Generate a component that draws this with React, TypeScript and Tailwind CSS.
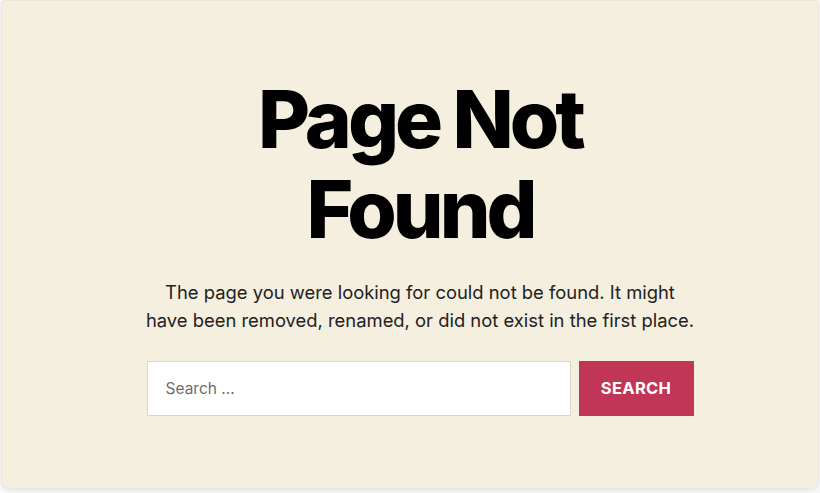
import React from "react";

export default function App() {
  return (
    <div className="w-[820px] h-[493px] bg-[#fafafa] px-[1px] pb-[4px]" style={{ fontFamily: "Inter, 'Noto Sans', sans-serif" }}>
      <div className="h-[489px] bg-[#f5efe0] rounded-b-[8px] rounded-t-[4px] border border-[#ece7da] shadow-[0_2px_4px_rgba(0,0,0,0.08)] flex flex-col items-center pt-[73px] pl-[20px]">
        <h1 className="text-[80px] leading-[90px] font-extrabold tracking-[-0.05em] text-black text-center w-[400px]">
          Page Not Found
        </h1>
        <p className="mt-[24px] text-[18.4px] leading-[28px] text-[#222] text-center w-[552px]">
          The page you were looking for could not be found. It might have been removed, renamed, or did not exist in the first place.
        </p>
        <div className="mt-[27px] flex gap-[8px] items-start">
          <div className="w-[424px] h-[55px] bg-white border border-[#dcd7ca] flex items-center pl-[18px]">
            <span className="text-[15.5px] text-[#6d6d6d]">Search ...</span>
          </div>
          <button className="w-[115px] h-[55px] bg-[#c13657] text-white text-[16.5px] font-bold tracking-[0.02em]">
            SEARCH
          </button>
        </div>
      </div>
    </div>
  );
}
